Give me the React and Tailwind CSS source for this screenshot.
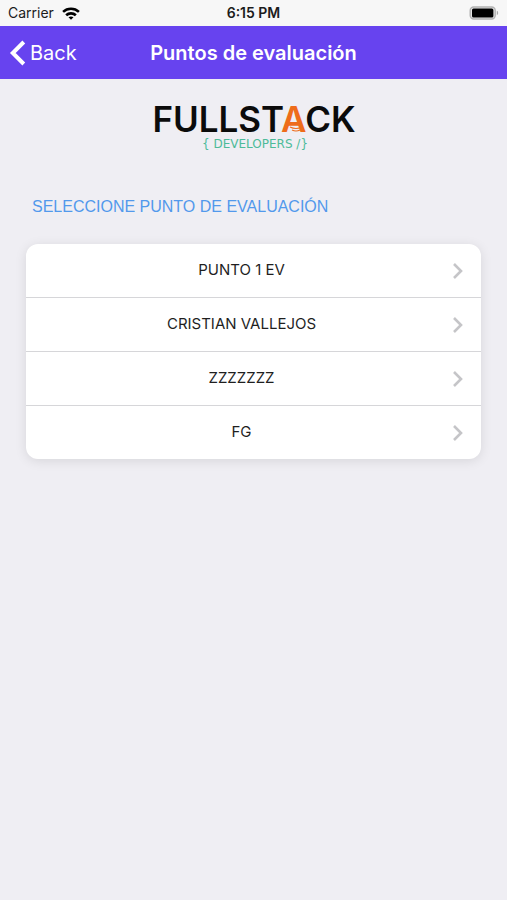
const puntos = [
  { id: 1, nombre: 'PUNTO 1 EV' },
  { id: 2, nombre: 'CRISTIAN VALLEJOS' },
  { id: 3, nombre: 'ZZZZZZZ' },
  { id: 4, nombre: 'FG' },
];

function StatusBar() {
  return (
    <div className="grid grid-cols-3 items-center h-[26px] pl-2 pr-2 bg-[#f7f7f7] text-sm text-[#1c1c1c]">
      <div className="flex items-center gap-2">
        <span>Carrier</span>
        <svg width="18" height="13" viewBox="0 0 20 14" fill="none" stroke="#000" strokeWidth="2.9" aria-hidden="true">
          <path d="M1.2 5.2C6.2.6 13.8.6 18.8 5.2" />
          <path d="M4.6 9c3-2.8 7.8-2.8 10.8 0" />
          <path d="M10 14 7.2 11.3c1.6-1.4 4-1.4 5.6 0Z" fill="#000" stroke="none" />
        </svg>
      </div>
      <span className="text-center font-semibold">6:15 PM</span>
      <svg className="justify-self-end" width="30" height="14" viewBox="0 0 30 14" aria-hidden="true">
        <rect x="1.2" y="1" width="25" height="12" rx="3.5" fill="#e4e4e4" stroke="#b2b2b2" strokeWidth="1.4" />
        <rect x="3" y="2.6" width="21.4" height="8.8" rx="1.5" fill="#000" />
        <path d="M27.8 4.8c1.8.6 1.8 3.8 0 4.4Z" fill="#a9a9a9" />
      </svg>
    </div>
  );
}

function Header() {
  return (
    <header className="grid grid-cols-[1fr_auto_1fr] items-center h-[53px] px-2 bg-[#6743ef] text-white">
      <button type="button" className="flex items-center gap-1 text-xl">
        <svg width="18" height="26" viewBox="0 0 18 26" fill="none" stroke="currentColor" strokeWidth="4" aria-hidden="true">
          <path d="M15.8 2 4.8 13l11 11" />
        </svg>
        Back
      </button>
      <h1 className="text-xl font-semibold">Puntos de evaluación</h1>
    </header>
  );
}

function Logo() {
  return (
    <svg className="mx-auto" width="220" height="58" viewBox="0 0 220 58" role="img" aria-label="Fullstack Developers">
      <text x="110" y="37" textAnchor="middle" fontSize="35" fontWeight="600" fill="#0b0b0b">
        FULLST<tspan fill="#ee6c1a">A</tspan>CK
      </text>
      {/* signal waves under the A */}
      <g fill="none" stroke="#ee6c1a" strokeWidth="1.1">
        <path d="M146 32q6 3 12 0" />
        <path d="M148 35q4 2 8 0" />
      </g>
      <text
        x="111"
        y="53"
        textAnchor="middle"
        fontSize="12"
        fill="#4dbb99"
        className="font-['DejaVu_Sans',sans-serif]"
      >
        {'{ DEVELOPERS /}'}
      </text>
    </svg>
  );
}

export default function App() {
  return (
    <div className="min-h-screen bg-[#efeef3] font-[Inter,sans-serif]">
      <StatusBar />
      <Header />
      <main className="px-[26px] pt-4">
        <Logo />
        <h2 className="mt-[42px] pl-[6px] font-['Liberation_Sans',sans-serif] text-base text-[#5299ec]">
          SELECCIONE PUNTO DE EVALUACIÓN
        </h2>
        <ul className="mt-[25px] rounded-xl bg-white overflow-hidden divide-y divide-[#d6d6d9] shadow-[0_2px_12px_rgba(0,0,0,0.1)]">
          {puntos.map((punto) => (
            <li key={punto.id}>
              <button type="button" className="flex items-center w-full h-[53px] pl-2 pr-4 text-[15px] text-[#1f1f1f]">
                <span className="flex-1 text-center">{punto.nombre}</span>
                <svg width="16" height="18" viewBox="0 0 16 18" fill="none" stroke="#c5c5c8" strokeWidth="2.6" aria-hidden="true">
                  <path d="m5 2 7 7-7 7" />
                </svg>
              </button>
            </li>
          ))}
        </ul>
      </main>
    </div>
  );
}
